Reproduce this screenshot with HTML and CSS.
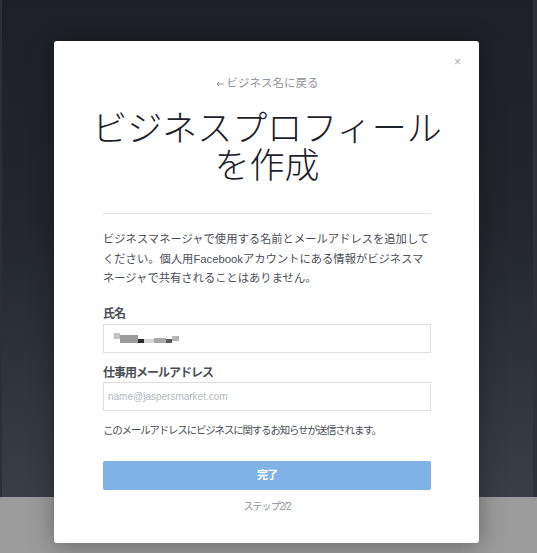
FILE: index.html
```html
<!DOCTYPE html>
<html lang="ja">
<head>
<meta charset="utf-8">
<title>ビジネスプロフィールを作成</title>
<link rel="stylesheet" href="styles.css">
</head>
<body>
<div class="backdrop">
  <div class="dim"></div>
  <div class="floor"></div>
  <div class="modal">
    <span class="close">×</span>
    <div class="back"><svg class="arrow" width="8" height="6" viewBox="0 0 8 6"><path d="M7.5 3H1M3.2 0.8L1 3l2.2 2.2" fill="none" stroke="#90949c" stroke-width="1"/></svg>ビジネス名に戻る</div>
    <h1 class="title"><span class="tline">ビジネスプロフィール</span><span class="tline">を作成</span></h1>
    <hr class="divider">
    <p class="intro">ビジネスマネージャで使用する名前とメールアドレスを追加して<br>ください。個人用Facebookアカウントにある情報がビジネスマ<br>ネージャで共有されることはありません。</p>
    <div class="label first">氏名</div>
    <div class="field">
      <span class="mosaic">
        <i class="m1"></i><i class="m2"></i><i class="m3"></i><i class="m4"></i><i class="m5"></i><i class="m6"></i><i class="m7"></i>
      </span>
    </div>
    <div class="label">仕事用メールアドレス</div>
    <div class="field"><span class="placeholder">name@jaspersmarket.com</span></div>
    <div class="help">このメールアドレスにビジネスに関するお知らせが送信されます。</div>
    <div class="button">完了</div>
    <div class="step">ステップ2/2</div>
  </div>
</div>
</body>
</html>
```
FILE: styles.css
```css
html, body {
  margin: 0;
  padding: 0;
}
body {
  width: 537px;
  height: 553px;
  overflow: hidden;
  font-family: "Liberation Sans", "Noto Sans CJK JP", sans-serif;
}
.backdrop {
  position: relative;
  width: 537px;
  height: 553px;
}
.dim {
  height: 497px;
  background: linear-gradient(180deg, #1d2029 0%, #23262f 45%, #3a3e48 100%);
  border-left: 2px solid #2c2f38;
  border-right: 4px solid #2e313a;
}
.floor {
  height: 56px;
  background: #9b9b9b;
}
.modal {
  position: absolute;
  left: 54px;
  top: 41px;
  width: 425px;
  height: 502px;
  box-sizing: border-box;
  padding: 34px 48px 0 49px;
  background: #fff;
  border-radius: 3px;
  box-shadow: 0 2px 24px rgba(0, 0, 0, 0.35);
}
.close {
  position: absolute;
  top: 14px;
  right: 18px;
  font-size: 12px;
  line-height: 14px;
  color: #a8abb0;
}
.back {
  display: flex;
  justify-content: center;
  align-items: center;
  gap: 3px;
  font-size: 11.5px;
  line-height: 16px;
  color: #90949c;
}
.arrow {
  display: block;
  margin-top: 1px;
}
.title {
  margin: 16px -30px 0;
  font-family: "Noto Sans CJK JP", sans-serif;
  font-weight: 300;
  font-size: 35px;
  text-align: center;
  color: #1d2129;
}
.tline {
  display: block;
  height: 37px;
  line-height: 37px;
}
.divider {
  margin: 32px 0 0;
  border: 0;
  border-top: 1px solid #dddfe2;
  height: 0;
}
.intro {
  margin: 16px 0 0;
  font-size: 11.3px;
  line-height: 19.5px;
  color: #4b4f56;
  white-space: nowrap;
}
.label {
  margin-top: 12px;
  font-size: 12px;
  font-weight: bold;
  letter-spacing: -1px;
  line-height: 16px;
  color: #4b4f56;
}
.label.first {
  margin-top: 17px;
}
.field {
  margin-top: 2px;
  height: 29px;
  box-sizing: border-box;
  border: 1px solid #dddfe2;
  display: flex;
  align-items: center;
  padding-left: 4px;
}
.label + .field + .label + .field {
  margin-top: 1px;
}
.placeholder {
  font-size: 10px;
  color: #b4b8be;
}
.mosaic {
  display: flex;
  align-items: flex-end;
  height: 10px;
  margin-left: 6px;
}
.mosaic i {
  display: block;
}
.m1 { width: 6px; height: 6px; background: #c4c4c4; align-self: flex-start; }
.m2 { width: 18px; height: 8px; background: #9a9a9a; }
.m3 { width: 6px; height: 4px; background: #2a2a2a; }
.m4 { width: 10px; height: 4px; background: #d4d4d4; }
.m5 { width: 12px; height: 5px; background: #a9a9a9; }
.m6 { width: 6px; height: 4px; background: #5a5a5a; }
.m7 { width: 7px; height: 5px; background: #b5b5b5; align-self: center; }
.help {
  margin-top: 11px;
  font-size: 10.5px;
  letter-spacing: -1.2px;
  line-height: 16px;
  color: #4b4f56;
  white-space: nowrap;
}
.button {
  margin-top: 23px;
  height: 29px;
  border-radius: 2px;
  background: #80b2e8;
  color: #fff;
  font-size: 11px;
  font-weight: bold;
  letter-spacing: -1px;
  line-height: 29px;
  text-align: center;
}
.step {
  margin-top: 9px;
  font-size: 10px;
  letter-spacing: -1px;
  line-height: 16px;
  text-align: center;
  color: #90949c;
}
```
